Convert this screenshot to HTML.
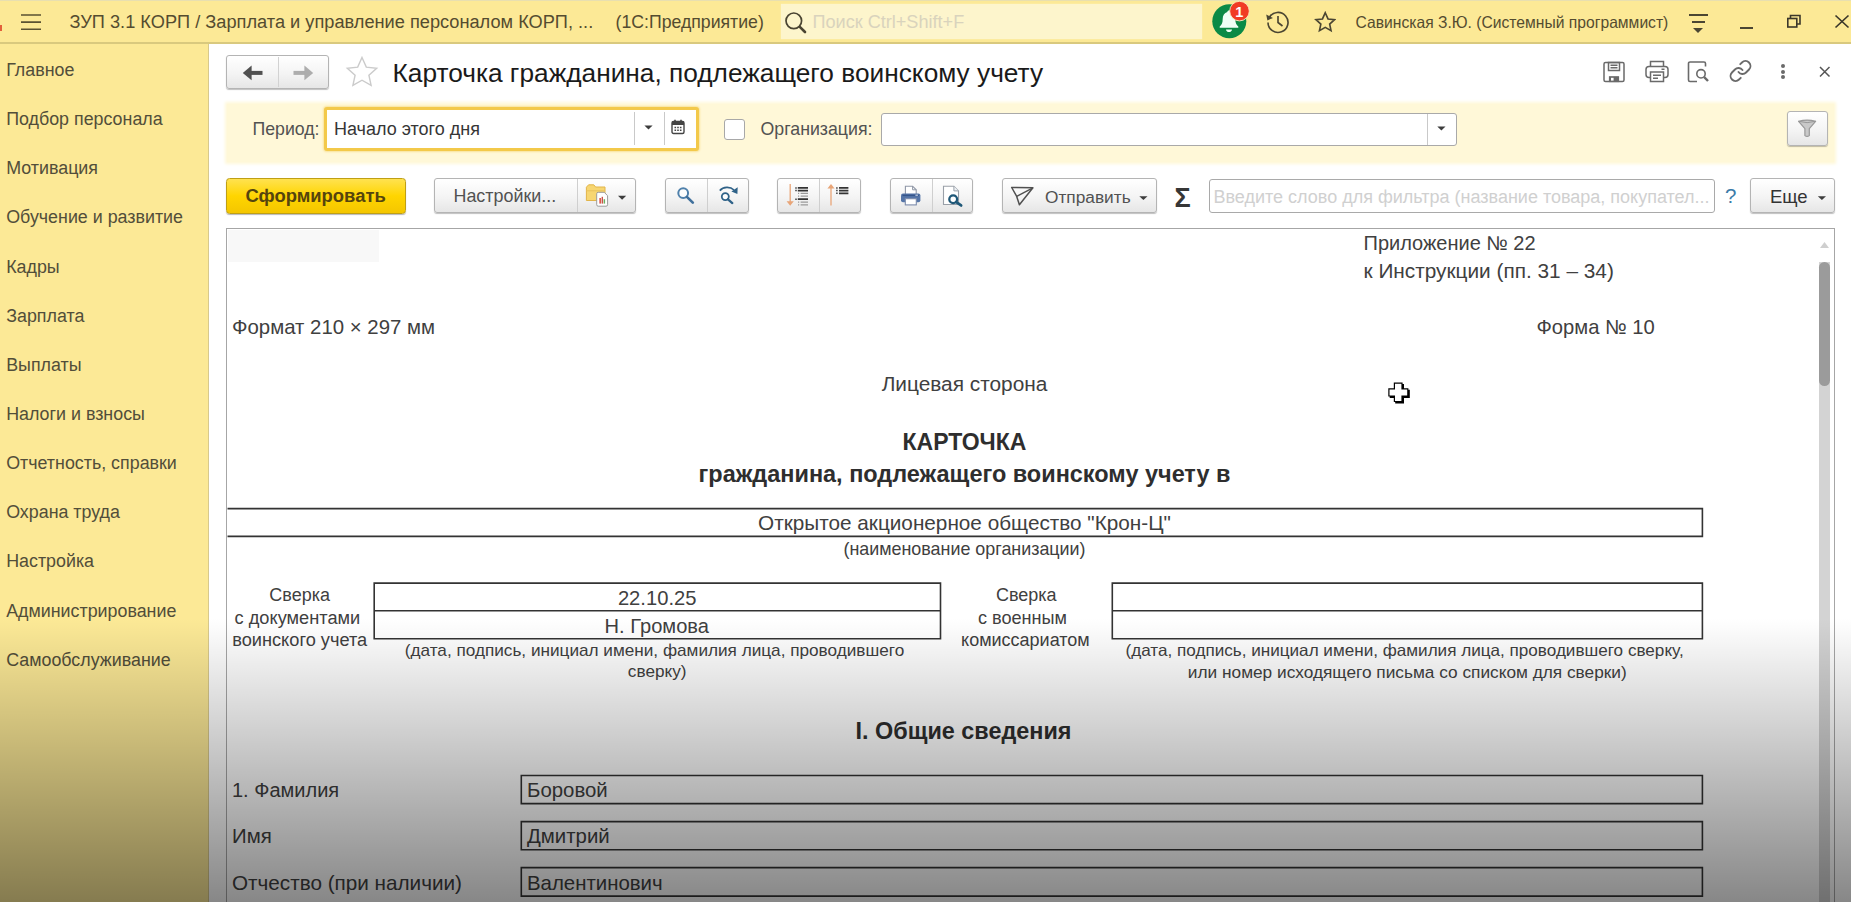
<!DOCTYPE html>
<html lang="ru"><head><meta charset="utf-8"><title>Карточка гражданина, подлежащего воинскому учету</title>
<style>
html,body{margin:0;padding:0;}
body{width:1851px;height:902px;position:relative;overflow:hidden;background:#fff;font-family:"Liberation Sans", sans-serif;}
.t{position:absolute;white-space:pre;line-height:1;font-family:"Liberation Sans", sans-serif;}
</style></head><body>
<div style="position:absolute;left:0px;top:0px;width:1851px;height:42px;background:#fce996;"></div>
<div style="position:absolute;left:0px;top:42px;width:1851px;height:1.6px;background:#d9c97e;"></div>
<div style="position:absolute;left:0px;top:0px;width:1851px;height:1.3px;background:#e8dfb0;"></div>
<div style="position:absolute;left:0px;top:24.5px;width:1.5px;height:6px;background:#e2603a;"></div>
<svg style="position:absolute;left:19px;top:12px" width="24" height="20" viewBox="19 12 24 20"><path d="M21 15h20M21 22.100h20M21 29.200h20" stroke="#5a5232" stroke-width="1.600"/></svg>
<div class="t" style="top:12px;line-height:20px;font-size:18.22px;color:#544c30;left:69.5px;">ЗУП 3.1 КОРП / Зарплата и управление персоналом КОРП, ...</div>
<div class="t" style="top:12px;line-height:20px;font-size:17.7px;color:#544c30;left:615.5px;">(1С:Предприятие)</div>
<div style="position:absolute;left:781px;top:3.5px;width:421px;height:35.3px;background:#fdf5cc;box-shadow:0 0 1px #fdf5cc;"></div>
<svg style="position:absolute;left:781px;top:6px" width="30" height="32" viewBox="0 0 30 32"><circle cx="12.800" cy="14.800" r="7.800" fill="none" stroke="#4a4432" stroke-width="1.700"/><path d="M18.800 20.800 L24 26" stroke="#4a4432" stroke-width="2.600" stroke-linecap="round"/></svg>
<div class="t" style="top:12px;line-height:20px;font-size:18.1px;color:#d9d3bd;left:812.5px;">Поиск Ctrl+Shift+F</div>
<svg style="position:absolute;left:1208px;top:0px" width="46" height="42" viewBox="0 0 46 42">
<circle cx="21.300" cy="21.200" r="17" fill="#0b8a46"/>
<path d="M21 10.5c-1 0-1.7.7-1.7 1.6-3 .9-4.6 3.5-4.6 6.8 0 4.2-1.2 6-3 7.6v1.2h18.6v-1.2c-1.8-1.6-3-3.400-3-7.600 0-3.300-1.600-5.900-4.600-6.800 0-.900-.700-1.600-1.700-1.600z" fill="#effff6"/>
<path d="M18 29.500h6c0 1.500-1.300 2.600-3 2.600s-3-1.100-3-2.600z" fill="#effff6"/>
<circle cx="31.500" cy="11.100" r="9.800" fill="#f13b24" stroke="#fbe9c0" stroke-width="0.900"/>
</svg>
<div class="t" style="top:4px;line-height:16px;font-size:14.5px;color:#fff;font-weight:bold;left:1239.3px;transform:translateX(-50%);">1</div>
<svg style="position:absolute;left:1263px;top:8px" width="30" height="28" viewBox="0 0 30 28">
<path d="M6.300 9.500A10 10 0 1 1 5 14.500" fill="none" stroke="#4b4632" stroke-width="1.650"/>
<path d="M3.200 6.500l1.200 6 5.600-2.600z" fill="#4b4632"/>
<path d="M15 8v6.500l4.500 3.500" fill="none" stroke="#4b4632" stroke-width="1.650"/>
</svg>
<svg style="position:absolute;left:1313.500px;top:11px" width="22.500" height="21.600" viewBox="0 0 26 25">
<path d="M13 2l3.200 7.200 7.600.8-5.700 5.200 1.600 7.600L13 18.900 6.300 22.800l1.600-7.600L2.200 10l7.600-.8z" fill="none" stroke="#4b4632" stroke-width="1.900" stroke-linejoin="miter"/>
</svg>
<div class="t" style="top:14px;line-height:17px;font-size:15.66px;color:#544c30;left:1355.5px;">Савинская З.Ю. (Системный программист)</div>
<div style="position:absolute;left:1688.5px;top:14px;width:19.5px;height:2px;background:#4b4632;"></div>
<div style="position:absolute;left:1692px;top:21px;width:12.5px;height:2px;background:#4b4632;"></div>
<svg style="position:absolute;left:1693px;top:28px" width="10" height="5"><path d="M0 0h10l-5 5z" fill="#4b4632"/></svg>
<div style="position:absolute;left:1740px;top:26.5px;width:13px;height:2px;background:#4b4632;"></div>
<svg style="position:absolute;left:1786px;top:14px" width="16" height="15" viewBox="0 0 16 15"><path d="M4.500 4V1.500h9.500V10h-3" fill="none" stroke="#3b372a" stroke-width="1.600"/><rect x="1.800" y="4.500" width="9" height="8.500" fill="none" stroke="#3b372a" stroke-width="1.600"/></svg>
<svg style="position:absolute;left:1833px;top:13px" width="18" height="17" viewBox="0 0 18 17"><path d="M2.500 2.500l13 12M15.500 2.500l-13 12" stroke="#3b372a" stroke-width="1.700"/></svg>
<div style="position:absolute;left:0px;top:43.6px;width:208px;height:858.4px;background:#fce996;"></div>
<div style="position:absolute;left:207.8px;top:43.6px;width:1.2px;height:858.4px;background:#d8c98c;"></div>
<div class="t" style="top:60px;line-height:20px;font-size:17.85px;color:#524e3a;left:6.2px;">Главное</div>
<div class="t" style="top:109px;line-height:20px;font-size:17.85px;color:#524e3a;left:6.2px;">Подбор персонала</div>
<div class="t" style="top:158px;line-height:20px;font-size:17.85px;color:#524e3a;left:6.2px;">Мотивация</div>
<div class="t" style="top:207px;line-height:20px;font-size:17.85px;color:#524e3a;left:6.2px;">Обучение и развитие</div>
<div class="t" style="top:257px;line-height:20px;font-size:17.85px;color:#524e3a;left:6.2px;">Кадры</div>
<div class="t" style="top:306px;line-height:20px;font-size:17.85px;color:#524e3a;left:6.2px;">Зарплата</div>
<div class="t" style="top:355px;line-height:20px;font-size:17.85px;color:#524e3a;left:6.2px;">Выплаты</div>
<div class="t" style="top:404px;line-height:20px;font-size:17.85px;color:#524e3a;left:6.2px;">Налоги и взносы</div>
<div class="t" style="top:453px;line-height:20px;font-size:17.85px;color:#524e3a;left:6.2px;">Отчетность, справки</div>
<div class="t" style="top:502px;line-height:20px;font-size:17.85px;color:#524e3a;left:6.2px;">Охрана труда</div>
<div class="t" style="top:551px;line-height:20px;font-size:17.85px;color:#524e3a;left:6.2px;">Настройка</div>
<div class="t" style="top:601px;line-height:20px;font-size:17.85px;color:#524e3a;left:6.2px;">Администрирование</div>
<div class="t" style="top:650px;line-height:20px;font-size:17.85px;color:#524e3a;left:6.2px;">Самообслуживание</div>
<div style="position:absolute;left:226px;top:55.4px;width:103.4px;height:33.2px;background:linear-gradient(#ffffff,#f4f4f4 55%,#e6e6e6);border:1px solid #b4b4b4;border-radius:3px;box-sizing:border-box;box-shadow:0 1px 1px rgba(0,0,0,.25);"></div>
<div style="position:absolute;left:277.5px;top:57px;width:1px;height:30px;background:#d2d2d2;"></div>
<svg style="position:absolute;left:240px;top:63px" width="26" height="20" viewBox="0 0 26 20"><path d="M22.500 9.900H9" fill="none" stroke="#505050" stroke-width="4"/><path d="M2.800 9.900l8.800-7.300v14.600z" fill="#505050"/></svg>
<svg style="position:absolute;left:290px;top:63px" width="26" height="20" viewBox="0 0 26 20"><path d="M3.500 9.900H17" fill="none" stroke="#adadad" stroke-width="4"/><path d="M23.200 9.900l-8.800-7.300v14.600z" fill="#adadad"/></svg>
<svg style="position:absolute;left:344px;top:54px" width="36" height="34" viewBox="0 0 36 34"><path d="M18 3.500l4.300 9.600 10.400 1.100-7.800 7 2.200 10.200L18 26.200 8.900 31.400l2.200-10.200-7.800-7 10.400-1.100z" fill="#fff" stroke="#cbcbcb" stroke-width="1.400"/></svg>
<div class="t" style="top:58px;line-height:30px;font-size:26.28px;color:#1a1a1a;left:392.5px;">Карточка гражданина, подлежащего воинскому учету</div>
<svg style="position:absolute;left:1602px;top:60px" width="24" height="23" viewBox="0 0 24 23" fill="none" stroke="#6a6a6a" stroke-width="1.500">
<rect x="2" y="2.500" width="20" height="19" rx="1.500"/><rect x="6.500" y="2.500" width="11" height="8"/><path d="M8.500 5.200h7M8.500 7.700h7"/><rect x="7.500" y="16.800" width="9" height="4.700" fill="#6a6a6a" stroke-width="1.200"/><rect x="9" y="17.800" width="2.600" height="2.800" fill="#fff" stroke="none"/></svg>
<svg style="position:absolute;left:1644px;top:59px" width="26" height="24" viewBox="0 0 26 24" fill="none" stroke="#6a6a6a" stroke-width="1.500">
<path d="M6.500 7.500V2.500h13v5"/><rect x="2" y="7.500" width="22" height="11" rx="3"/><rect x="6.500" y="13" width="13" height="9.500" fill="#fff"/><path d="M9 16.200h8M9 19.200h5M17.500 10.300h3"/></svg>
<svg style="position:absolute;left:1686px;top:59px" width="24" height="24" viewBox="0 0 24 24" fill="none" stroke="#6a6a6a" stroke-width="1.600">
<path d="M19.500 7.500V4.500a1.500 1.500 0 0 0-1.500-1.500h-14a1.500 1.500 0 0 0-1.500 1.500v16.500a1.500 1.500 0 0 0 1.500 1.500h7"/><circle cx="15" cy="14.800" r="4.200"/><path d="M18.200 18.200l3.800 3.800" stroke-width="2.400"/></svg>
<svg style="position:absolute;left:1728px;top:59px" width="25" height="24" viewBox="0 0 25 24" fill="none" stroke="#6a6a6a" stroke-width="1.900" stroke-linecap="round">
<g transform="translate(0.500,0) scale(1.0)"><path d="M10 13a5 5 0 0 0 7.540.540l3-3a5 5 0 0 0-7.070-7.070l-1.720 1.710"/><path d="M14 11a5 5 0 0 0-7.540-.540l-3 3a5 5 0 0 0 7.070 7.070l1.710-1.710"/></g></svg>
<div style="position:absolute;left:1780.5px;top:64px;width:4.2px;height:4.2px;background:#6a6a6a;border-radius:50%;"></div>
<div style="position:absolute;left:1780.5px;top:69.5px;width:4.2px;height:4.2px;background:#6a6a6a;border-radius:50%;"></div>
<div style="position:absolute;left:1780.5px;top:75px;width:4.2px;height:4.2px;background:#6a6a6a;border-radius:50%;"></div>
<svg style="position:absolute;left:1817px;top:64px" width="15" height="15" viewBox="0 0 15 15"><path d="M3 3l9.500 9.500M12.500 3L3 12.500" stroke="#555" stroke-width="1.500"/></svg>
<div style="position:absolute;left:227px;top:103.5px;width:1607px;height:58px;background:#fff8d8;box-shadow:0 0 3px 2px #fff8d8;"></div>
<div class="t" style="top:119px;line-height:20px;font-size:17.7px;color:#525252;left:252.5px;">Период:</div>
<div style="position:absolute;left:324px;top:107px;width:374.5px;height:43.5px;background:#fff;border:3px solid #f3c94a;border-radius:3px;box-sizing:border-box;box-shadow:0 0 2px 1px #f9e39a;"></div>
<div class="t" style="top:119px;line-height:20px;font-size:18.0px;color:#363636;left:334px;">Начало этого дня</div>
<div style="position:absolute;left:634px;top:112px;width:1px;height:33px;background:#c9c9c9;"></div>
<div style="position:absolute;left:663.5px;top:112px;width:1px;height:33px;background:#c9c9c9;"></div>
<svg style="position:absolute;left:643px;top:124px" width="13" height="9" viewBox="643 124 13 9"><path d="M644.4 125.6h8.2l-4.1 3.9z" fill="#3d3d3d"/></svg>
<svg style="position:absolute;left:671px;top:119px" width="14" height="16" viewBox="0 0 14 16"><rect x="1" y="2.500" width="12" height="12" rx="1.500" fill="#fff" stroke="#444" stroke-width="1.400"/><rect x="1" y="2.500" width="12" height="3.500" fill="#444"/><path d="M4 .8v3M10 .8v3" stroke="#444" stroke-width="1.600"/><path d="M3.500 8.500h1.600M6.200 8.500h1.600M8.900 8.500h1.600M3.500 11.200h1.600M6.200 11.200h1.600M8.900 11.200h1.600" stroke="#444" stroke-width="1.400"/></svg>
<div style="position:absolute;left:723.5px;top:118.5px;width:21px;height:21px;background:#fff;border:1px solid #a8a8a8;border-radius:3px;box-sizing:border-box;"></div>
<div class="t" style="top:119px;line-height:20px;font-size:17.75px;color:#525252;left:760.5px;">Организация:</div>
<div style="position:absolute;left:881px;top:112.5px;width:576px;height:33.5px;background:#fff;border:1px solid #a9a9a9;border-radius:3px;box-sizing:border-box;"></div>
<div style="position:absolute;left:1427px;top:113.5px;width:1px;height:31.5px;background:#c9c9c9;"></div>
<svg style="position:absolute;left:1436px;top:125px" width="13" height="9" viewBox="1436 125 13 9"><path d="M1437.3 126.5h8.2l-4.1 3.9z" fill="#3d3d3d"/></svg>
<div style="position:absolute;left:1786.5px;top:110.5px;width:41.5px;height:35.5px;background:linear-gradient(#ffffff,#f4f4f4 55%,#e6e6e6);border:1px solid #b4b4b4;border-radius:3px;box-sizing:border-box;box-shadow:0 1px 1px rgba(0,0,0,.25);"></div>
<svg style="position:absolute;left:1796px;top:118px" width="23" height="22" viewBox="1796 118 23 22"><path d="M1798.600 121.300q8.500-2.400 17 0l-6.300 7.300v7q-2.200 1.700-4.400 0v-7z" fill="#c9c9c9" stroke="#989898" stroke-width="1.200" stroke-linejoin="round"/><path d="M1798.600 121.300q8.500 2.700 17 0" fill="none" stroke="#989898" stroke-width="1"/></svg>
<div style="position:absolute;left:226px;top:177.6px;width:179.5px;height:36px;background:linear-gradient(#ffe250,#ffd500 50%,#f4c600);border:1px solid #bf9f14;border-radius:3.500px;box-sizing:border-box;box-shadow:0 1px 1px rgba(0,0,0,.28);"></div>
<div class="t" style="top:185px;line-height:21px;font-size:18.42px;color:#55450e;font-weight:bold;left:245.5px;">Сформировать</div>
<div style="position:absolute;left:434px;top:178px;width:201.5px;height:35.3px;background:linear-gradient(#ffffff,#f4f4f4 55%,#e6e6e6);border:1px solid #b4b4b4;border-radius:3px;box-sizing:border-box;box-shadow:0 1px 1px rgba(0,0,0,.25);"></div>
<div style="position:absolute;left:577.2px;top:179px;width:1px;height:33.3px;background:#cfcfcf;"></div>
<div class="t" style="top:186px;line-height:20px;font-size:17.9px;color:#525252;left:453.5px;">Настройки...</div>
<svg style="position:absolute;left:584px;top:182px" width="26" height="26" viewBox="584 182 26 26"><path d="M586.400 187.200l2.200-2.400h5.200l1.800 2.200h9.400v13.500h-18.600z" fill="#f7d672" stroke="#e2b54a" stroke-width="1"/><path d="M586.400 190.800h18.600" stroke="#e9c25c" stroke-width="1"/><path d="M596.700 193.800a1.500 1.500 0 0 1 1.500-1.500h6l3.400 3.400v9a1.500 1.500 0 0 1-1.500 1.500h-7.900a1.500 1.500 0 0 1-1.500-1.500z" fill="#fff" stroke="#9a9a9a" stroke-width="1"/><rect x="599.400" y="198" width="1.500" height="5.600" fill="#d8473a"/><rect x="601.600" y="196.800" width="1.400" height="6.800" fill="#c9544a"/><rect x="603.600" y="199.200" width="1.500" height="4.400" fill="#6faf62"/></svg>
<svg style="position:absolute;left:617px;top:194px" width="13" height="9" viewBox="617 194 13 9"><path d="M618 195.8h8.2l-4.1 3.9z" fill="#3d3d3d"/></svg>
<div style="position:absolute;left:665px;top:178px;width:83.6px;height:35.3px;background:linear-gradient(#ffffff,#f4f4f4 55%,#e6e6e6);border:1px solid #b4b4b4;border-radius:3px;box-sizing:border-box;box-shadow:0 1px 1px rgba(0,0,0,.25);"></div>
<div style="position:absolute;left:706.8px;top:179px;width:1px;height:33.3px;background:#cfcfcf;"></div>
<svg style="position:absolute;left:674px;top:184px" width="24" height="24" viewBox="674 184 24 24"><circle cx="683.200" cy="193.100" r="4.900" fill="#fdfdfd" stroke="#4f80ab" stroke-width="2"/><path d="M686.900 196.900l5.900 5.700" stroke="#40709c" stroke-width="2.700" stroke-linecap="round"/></svg>
<svg style="position:absolute;left:716px;top:182px" width="26" height="26" viewBox="716 182 26 26"><circle cx="725.300" cy="196.600" r="3.500" fill="#fdfdfd" stroke="#2f6288" stroke-width="1.800"/><path d="M728 199.300l4.300 3.800" stroke="#2f6288" stroke-width="2.300" stroke-linecap="round"/><path d="M719.800 190.600c3.400-4.200 10.400-4.400 14.200-.6" fill="none" stroke="#2f6288" stroke-width="1.700"/><path d="M737.700 187.300l-.3 6.800-6-2.700z" fill="#2f6288"/></svg>
<div style="position:absolute;left:777.4px;top:178px;width:83.6px;height:35.3px;background:linear-gradient(#ffffff,#f4f4f4 55%,#e6e6e6);border:1px solid #b4b4b4;border-radius:3px;box-sizing:border-box;box-shadow:0 1px 1px rgba(0,0,0,.25);"></div>
<div style="position:absolute;left:819.2px;top:179px;width:1px;height:33.3px;background:#cfcfcf;"></div>
<svg style="position:absolute;left:784px;top:182px" width="28" height="26" viewBox="784 182 28 26"><path d="M790.200 184v18" stroke="#e8a578" stroke-width="1.300"/><path d="M786.600 201.200h7.200l-3.600 4.500z" fill="#e8a578"/><path d="M797.800 187.900h10.200M797.800 190.600h10.200M797.800 199.200h10.200" stroke="#333" stroke-width="1.700"/><path d="M795.300 187.900h1.400M795.300 190.600h1.400M795.300 199.200h1.400" stroke="#333" stroke-width="1.500"/><path d="M800.600 193.400h7.400M800.600 196.200h7.400M800.600 202.100h7.400M800.600 204.900h7.400" stroke="#9a9a9a" stroke-width="1.300"/><path d="M798 193.400h1.200M798 196.200h1.200M798 202.100h1.200M798 204.900h1.200" stroke="#9a9a9a" stroke-width="1.200"/></svg>
<svg style="position:absolute;left:825px;top:182px" width="28" height="26" viewBox="825 182 28 26"><path d="M831 187.500v18" stroke="#e8a578" stroke-width="1.300"/><path d="M827.400 188.600h7.200l-3.600-4.700z" fill="#e8a578"/><path d="M839 187.900h9.400M839 190.600h9.400M839 193.300h9.400" stroke="#333" stroke-width="1.700"/><path d="M836.200 187.900h1.400M836.200 190.600h1.400M836.200 193.300h1.400" stroke="#333" stroke-width="1.500"/></svg>
<div style="position:absolute;left:889.7px;top:178px;width:83.6px;height:35.3px;background:linear-gradient(#ffffff,#f4f4f4 55%,#e6e6e6);border:1px solid #b4b4b4;border-radius:3px;box-sizing:border-box;box-shadow:0 1px 1px rgba(0,0,0,.25);"></div>
<div style="position:absolute;left:931.6px;top:179px;width:1px;height:33.3px;background:#cfcfcf;"></div>
<svg style="position:absolute;left:898px;top:183px" width="26" height="25" viewBox="898 183 26 25"><path d="M905.400 194v-7.800h7.200l3.600 3.600v4.200" fill="#fff" stroke="#8f97a6" stroke-width="1.100"/><path d="M912.600 186.200v3.600h3.600" fill="none" stroke="#8f97a6" stroke-width="1"/><rect x="901" y="193.600" width="19.400" height="8.600" rx="2" fill="#5575a8"/><rect x="902.500" y="194.700" width="16.400" height="1.400" fill="#35558a"/><rect x="915.400" y="194.600" width="2.500" height="1.200" fill="#c9d4e8"/><rect x="905.300" y="198.700" width="11" height="6.200" fill="#fff" stroke="#7b8bab" stroke-width="1.100"/></svg>
<svg style="position:absolute;left:940px;top:183px" width="26" height="26" viewBox="940 183 26 26"><path d="M943.500 186.300h10.400l4.600 4.600v13.600h-15z" fill="#fff" stroke="#9aa0a8" stroke-width="1.100"/><path d="M953.900 186.300v4.600h4.600" fill="#eef1f5" stroke="#9aa0a8" stroke-width="1"/><circle cx="953.200" cy="199.200" r="3.900" fill="#fff" stroke="#1f5878" stroke-width="2.300"/><path d="M956.300 202.100l4.800 3.300" stroke="#1f5878" stroke-width="2.800" stroke-linecap="round"/></svg>
<div style="position:absolute;left:1002.4px;top:178px;width:154.9px;height:35.3px;background:linear-gradient(#ffffff,#f4f4f4 55%,#e6e6e6);border:1px solid #b4b4b4;border-radius:3px;box-sizing:border-box;box-shadow:0 1px 1px rgba(0,0,0,.25);"></div>
<svg style="position:absolute;left:1008px;top:184px" width="28" height="24" viewBox="1008 184 28 24"><path d="M1011.700 187.500l21.200.3-13.500 17-2.700-8.400z" fill="none" stroke="#505050" stroke-width="1.500" stroke-linejoin="round"/><path d="M1032.900 187.800l-16.200 8.600" stroke="#505050" stroke-width="1.400"/></svg>
<div class="t" style="top:187px;line-height:20px;font-size:17.3px;color:#525252;left:1045px;">Отправить</div>
<svg style="position:absolute;left:1138px;top:195px" width="13" height="9" viewBox="1138 195 13 9"><path d="M1139.3 196.2h8.2l-4.1 3.9z" fill="#3d3d3d"/></svg>
<div class="t" style="top:183px;line-height:30px;font-size:27px;color:#363636;font-weight:bold;left:1174.5px;">Σ</div>
<div style="position:absolute;left:1208.5px;top:179px;width:506.5px;height:34.3px;background:#fff;border:1px solid #a9a9a9;border-radius:3px;box-sizing:border-box;"></div>
<div class="t" style="top:187px;line-height:20px;font-size:18.0px;color:#d0d0d0;left:1213.5px;">Введите слово для фильтра (название товара, покупател...</div>
<div class="t" style="top:184px;line-height:23px;font-size:20.5px;color:#3b7ba8;left:1725px;">?</div>
<div style="position:absolute;left:1750px;top:178px;width:85px;height:35.3px;background:linear-gradient(#ffffff,#f4f4f4 55%,#e6e6e6);border:1px solid #b4b4b4;border-radius:3px;box-sizing:border-box;box-shadow:0 1px 1px rgba(0,0,0,.25);"></div>
<div class="t" style="top:186px;line-height:21px;font-size:18.5px;color:#333;left:1770px;">Еще</div>
<svg style="position:absolute;left:1816px;top:195px" width="13" height="9" viewBox="1816 195 13 9"><path d="M1817.8 196.2h8.2l-4.1 3.9z" fill="#3d3d3d"/></svg>
<div style="position:absolute;left:226px;top:228px;width:1609px;height:682px;background:#fff;border:1px solid #a6a6a6;box-sizing:border-box;"></div>
<div style="position:absolute;left:228px;top:230px;width:151px;height:32px;background:#f8f8f8;"></div>
<div style="position:absolute;left:1818.5px;top:230px;width:11.5px;height:680px;background:#d3d3d3;"></div>
<div style="position:absolute;left:1818.5px;top:229px;width:11.5px;height:33px;background:#fff;"></div>
<svg style="position:absolute;left:1820px;top:242px" width="9" height="6"><path d="M0 6h9l-4.500-6z" fill="#cfcfcf"/></svg>
<div style="position:absolute;left:1818.5px;top:261.5px;width:11.5px;height:124.5px;background:#9b9b9b;border-radius:6px;"></div>
<div class="t" style="top:232px;line-height:22px;font-size:20.0px;color:#404040;left:1363.5px;">Приложение № 22</div>
<div class="t" style="top:259px;line-height:23px;font-size:20.8px;color:#404040;left:1363.5px;">к Инструкции (пп. 31 – 34)</div>
<div class="t" style="top:316px;line-height:22px;font-size:20.4px;color:#404040;left:232px;">Формат 210 × 297 мм</div>
<div class="t" style="top:316px;line-height:22px;font-size:20.2px;color:#404040;left:1536.5px;">Форма № 10</div>
<div class="t" style="top:372px;line-height:23px;font-size:20.85px;color:#404040;left:964.5px;transform:translateX(-50%);">Лицевая сторона</div>
<div class="t" style="top:429px;line-height:26px;font-size:23.0px;color:#2e2e2e;font-weight:bold;left:964.5px;transform:translateX(-50%);">КАРТОЧКА</div>
<div class="t" style="top:461px;line-height:26px;font-size:23.47px;color:#2e2e2e;font-weight:bold;left:964.5px;transform:translateX(-50%);">гражданина, подлежащего воинскому учету в</div>
<svg style="position:absolute;left:0;top:0" width="1851" height="902" viewBox="0 0 1851 902" fill="none" stroke="#333333" stroke-width="1.6"><path d="M227.5 508.6H1702.4V536.4H227.5"/><path d="M374.2 583.1H940.5V638.7H374.2z"/><path d="M374.200 610.7H940.500"/><path d="M1112.3 583.1H1702.4V638.7H1112.3z"/><path d="M1112.300 610.7H1702.4"/><path d="M521.3 775.5H1702.4V803.6H521.3z"/><path d="M521.3 821.6H1702.4V849.7H521.3z"/><path d="M521.3 867.6H1702.4V896.1H521.3z"/></svg>
<div class="t" style="top:511px;line-height:23px;font-size:20.74px;color:#404040;left:964.5px;transform:translateX(-50%);">Открытое акционерное общество "Крон-Ц"</div>
<div class="t" style="top:539px;line-height:20px;font-size:17.9px;color:#404040;left:964.5px;transform:translateX(-50%);">(наименование организации)</div>
<div class="t" style="top:585px;line-height:20px;font-size:18.0px;color:#404040;left:299.7px;transform:translateX(-50%);">Сверка</div>
<div class="t" style="top:608px;line-height:20px;font-size:18.2px;color:#404040;left:297.4px;transform:translateX(-50%);">с документами</div>
<div class="t" style="top:630px;line-height:20px;font-size:18.2px;color:#404040;left:299.7px;transform:translateX(-50%);">воинского учета</div>
<div class="t" style="top:587px;line-height:22px;font-size:20.2px;color:#404040;left:657.2px;transform:translateX(-50%);">22.10.25</div>
<div class="t" style="top:615px;line-height:22px;font-size:20.1px;color:#404040;left:656.8px;transform:translateX(-50%);">Н. Громова</div>
<div class="t" style="top:640px;line-height:20px;font-size:17.18px;color:#404040;left:654.5px;transform:translateX(-50%);">(дата, подпись, инициал имени, фамилия лица, проводившего</div>
<div class="t" style="top:661px;line-height:20px;font-size:17.18px;color:#404040;left:657.2px;transform:translateX(-50%);">сверку)</div>
<div class="t" style="top:585px;line-height:20px;font-size:18.0px;color:#404040;left:1026.3px;transform:translateX(-50%);">Сверка</div>
<div class="t" style="top:608px;line-height:20px;font-size:18.1px;color:#404040;left:1022.5px;transform:translateX(-50%);">с военным</div>
<div class="t" style="top:630px;line-height:20px;font-size:18.0px;color:#404040;left:1025.4px;transform:translateX(-50%);">комиссариатом</div>
<div class="t" style="top:641px;line-height:19px;font-size:17.12px;color:#404040;left:1404.6px;transform:translateX(-50%);">(дата, подпись, инициал имени, фамилия лица, проводившего сверку,</div>
<div class="t" style="top:662px;line-height:20px;font-size:17.27px;color:#404040;left:1407.3px;transform:translateX(-50%);">или номер исходящего письма со списком для сверки)</div>
<div class="t" style="top:718px;line-height:26px;font-size:23.4px;color:#2e2e2e;font-weight:bold;left:963.5px;transform:translateX(-50%);">I. Общие сведения</div>
<div class="t" style="top:779px;line-height:22px;font-size:20.0px;color:#404040;left:232px;">1. Фамилия</div>
<div class="t" style="top:779px;line-height:22px;font-size:20.4px;color:#404040;left:527px;">Боровой</div>
<div class="t" style="top:825px;line-height:22px;font-size:20.4px;color:#404040;left:232px;">Имя</div>
<div class="t" style="top:825px;line-height:22px;font-size:20.4px;color:#404040;left:527px;">Дмитрий</div>
<div class="t" style="top:871px;line-height:23px;font-size:20.7px;color:#404040;left:232px;">Отчество (при наличии)</div>
<div class="t" style="top:872px;line-height:22px;font-size:20.4px;color:#404040;left:527px;">Валентинович</div>
<svg style="position:absolute;left:1385px;top:379px" width="28" height="28" viewBox="1385 379 28 28"><path d="M1395 383.7h6.400v5.800h5.800v5.900h-5.800v5.500h-6.400v-5.500h-5.500v-5.900h5.500z" transform="translate(1.400,1.400)" fill="#000" stroke="#000" stroke-width="2.400"/><path d="M1395 383.7h6.400v5.800h5.800v5.900h-5.800v5.500h-6.400v-5.500h-5.500v-5.900h5.500z" fill="#fff" stroke="#000" stroke-width="2.400" paint-order="stroke"/></svg>
<div style="position:absolute;left:0px;top:618px;width:1851px;height:284px;background:linear-gradient(to bottom,rgba(0,0,0,0) 0%,rgba(0,0,0,.012) 3%,rgba(0,0,0,.47) 100%);pointer-events:none;"></div>
</body></html>
